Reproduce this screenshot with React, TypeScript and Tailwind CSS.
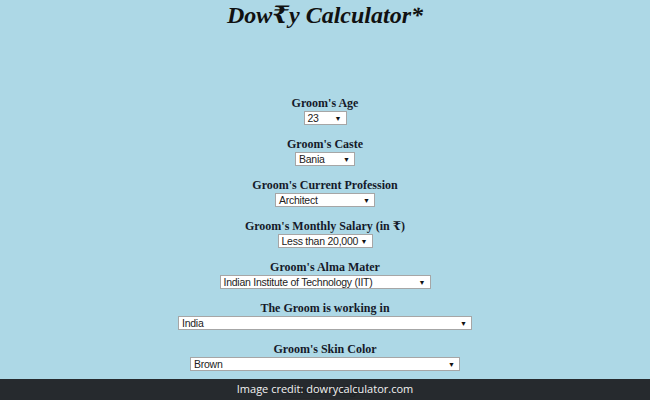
const fields = [
  { label: "Groom's Age", value: '23', width: 'w-[43px]' },
  { label: "Groom's Caste", value: 'Bania', width: 'w-[60px]' },
  { label: "Groom's Current Profession", value: 'Architect', width: 'w-[100px]' },
  { label: "Groom's Monthly Salary (in ₹)", value: 'Less than 20,000', width: 'w-[95px]' },
  { label: "Groom's Alma Mater", value: 'Indian Institute of Technology (IIT)', width: 'w-[211px]' },
  { label: 'The Groom is working in', value: 'India', width: 'w-[294px]' },
  { label: "Groom's Skin Color", value: 'Brown', width: 'w-[270px]' },
  { label: "Groom's Height", value: "5' 5\" to 5' 8\"", width: 'w-[90px]' },
];

// Plain-looking dropdown, like an unstyled browser select
const Dropdown = ({ value, width }: { value: string; width: string }) => (
  <div
    className={`${width} mx-auto h-[14px] bg-white border border-[#a6a6a6] flex items-center justify-between pl-[3px] pr-[4px] text-[10.5px] leading-none text-[#222] font-['Liberation_Sans',Arial,sans-serif]`}
  >
    <span className="whitespace-nowrap tracking-[-0.25px]">{value}</span>
    <span className="shrink-0 text-[7px] text-[#111] ml-[2px]">▼</span>
  </div>
);

const App = () => {
  return (
    <div className="relative w-[650px] h-[400px] overflow-hidden bg-[#add8e6] font-['Liberation_Serif','DejaVu_Serif',serif]">
      <h1 className="text-center text-[24px] leading-[30px] font-bold italic text-[#111]">
        Dow₹y Calculator*
      </h1>

      <div className="mt-[66px] flex flex-col gap-[12px]">
        {fields.map((f) => (
          <div key={f.label} className="flex flex-col items-center">
            <label className="text-[12px] leading-[15px] font-bold text-[#151a2a]">{f.label}</label>
            <Dropdown value={f.value} width={f.width} />
          </div>
        ))}
      </div>

      <div className="absolute bottom-0 left-0 right-0 h-[21px] bg-[#1f2124]/95 flex items-center justify-center">
        <span className="text-[11px] text-[#f2f2f2] font-['Open_Sans',sans-serif]">
          Image credit: dowrycalculator.com
        </span>
      </div>
    </div>
  );
};

export default App;
